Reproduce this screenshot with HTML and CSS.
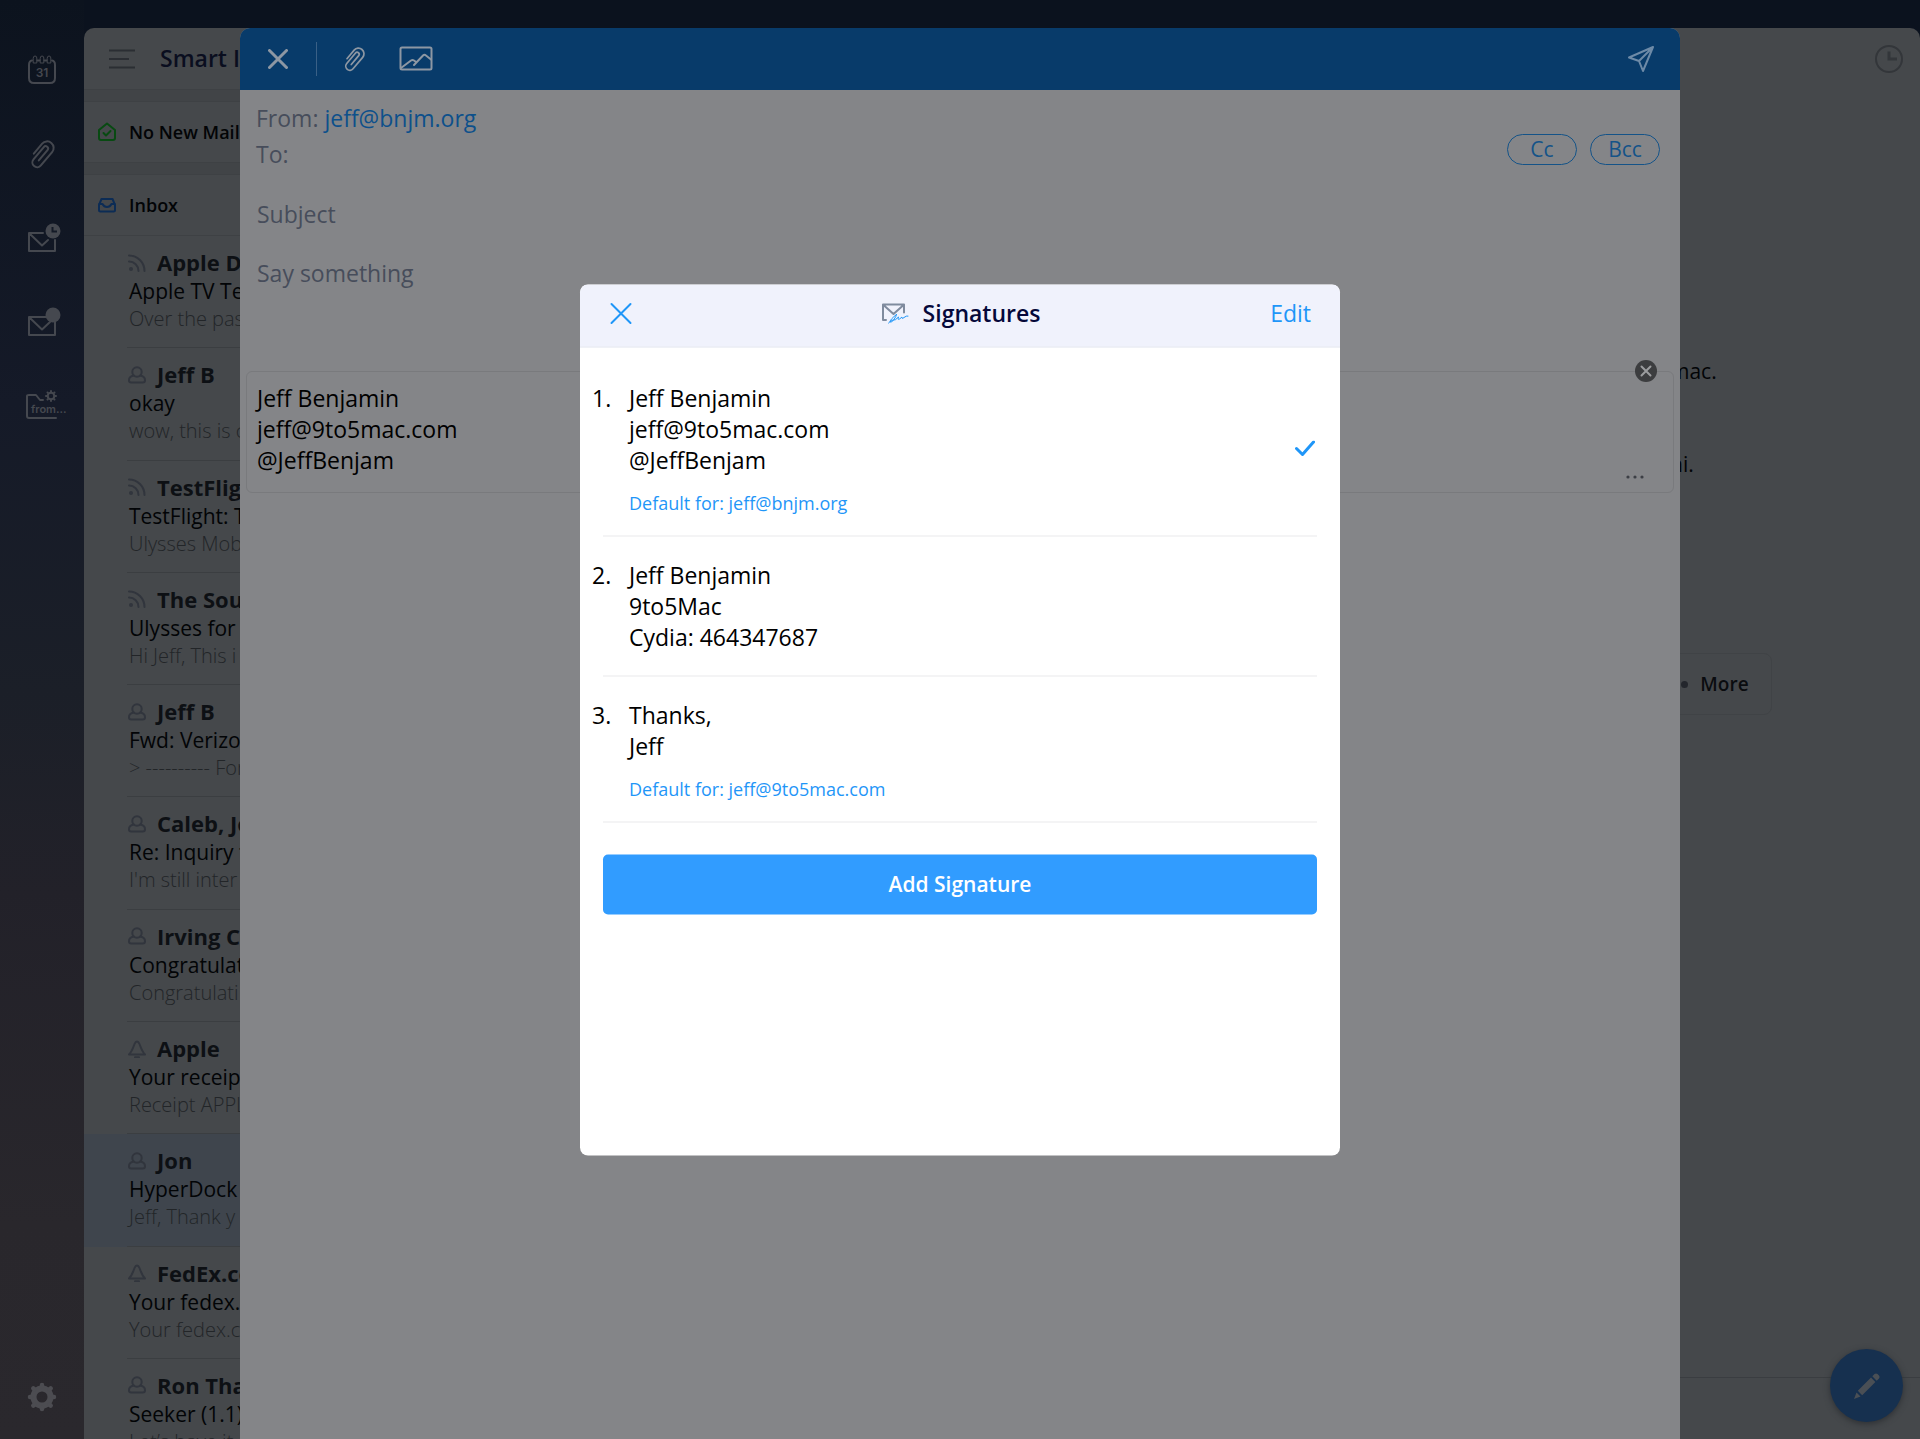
FILE: index.html
```html
<!DOCTYPE html>
<html lang="en">
<head>
<meta charset="utf-8">
<meta name="viewport" content="width=device-width, initial-scale=1">
<title>Signatures</title>
<link rel="stylesheet" href="styles.css">
</head>
<body>
<svg class="sprite" aria-hidden="true">
  <symbol id="feed" viewBox="0 0 18 18"><circle cx="3" cy="15" r="2" fill="currentColor" stroke="none"/><path d="M1 7.500a9.500 9.500 0 0 1 9.500 9.500M1 1.500a15.500 15.500 0 0 1 15.500 15.500"/></symbol>
  <symbol id="person" viewBox="0 0 18 18"><path d="M5.800 9.600C1.500 10.500 1 12.500 1 14.200C1 15.600 1.700 16.500 3.200 16.500H14.800C16.300 16.500 17 15.600 17 14.200C17 12.500 16.500 10.500 12.200 9.600"/><circle cx="9" cy="6" r="4.700"/></symbol>
  <symbol id="bell" viewBox="0 0 18 18"><path d="M1 14.500C4 11.500 5 8 6.500 4Q7.500 1.500 9 1.500T11.500 4C13 8 14 11.500 17 14.500Z"/><path d="M7 17.200H11"/></symbol>
  <symbol id="clip" viewBox="0 0 28 30"><path transform="translate(14 15) rotate(40)" d="M-6.500 5V-8A6.500 6.500 0 0 1 6.500 -8V9.500A4.800 4.800 0 0 1 -3.100 9.500V-6.500A2.300 2.300 0 0 1 1.700 -6.500V7"/></symbol>
</svg>
<div class="app">
  <nav class="rail" aria-label="Shortcuts">
    <button class="rail-btn" aria-label="Calendar"><svg width="30" height="30" viewBox="0 0 30 30"><path d="M5 5.500Q2 6 2 10V23Q2 28 7 28H23Q28 28 28 23V10Q28 6 25 5.500M10.500 5.500H12.500M17.500 5.500H19.500"/><path d="M6.200 5.500V8H9.800V3Q9.800 1 8 1T6.200 3ZM13.200 5.500V8H16.800V3Q16.800 1 15 1T13.200 3ZM20.200 5.500V8H23.800V3Q23.800 1 22 1T20.200 3Z" class="thin"/><text x="15" y="22" text-anchor="middle" class="cal-day">31</text></svg></button>
    <button class="rail-btn" aria-label="Attachments"><svg width="28" height="30"><use href="#clip"/></svg></button>
    <button class="rail-btn" aria-label="Snoozed"><svg width="34" height="30" viewBox="0 0 34 30"><path d="M18 10H4V28H30V17M5 11L17 22.500L23 17"/><circle cx="28" cy="8" r="7.500" class="solid"/><path d="M27.500 4V8.500H32" class="cut"/></svg></button>
    <button class="rail-btn" aria-label="Unread"><svg width="34" height="30" viewBox="0 0 34 30"><path d="M21 10H4V28H30V15M5 11L17 22.500L25 15"/><circle cx="28" cy="8" r="7.500" class="solid"/></svg></button>
    <button class="rail-btn folder" aria-label="Sender folder"><svg width="42" height="30" viewBox="0 0 42 30"><path d="M31 27H4Q2 27 2 25V5Q2 4 4 4H11L15 9H18"/><circle cx="26" cy="5" r="3.300"/><path d="M26 .5V0M26 10V9.500M21 5H21.500M30.500 5H31M22.800 1.800L22.500 1.500M29.200 1.800L29.500 1.500M22.800 8.200L22.500 8.500M29.200 8.200L29.500 8.500"/><text x="6" y="22" class="folder-name">from...</text></svg></button>
    <button class="rail-btn rail-settings" aria-label="Settings"><svg width="30" height="30" viewBox="0 0 30 30"><circle cx="15" cy="15" r="8.500" stroke-width="6"/><path stroke-width="4.500" d="M15 4V3M15 26V27M4 15H3M26 15H27M7.200 7.200L6.300 6.300M22.800 22.800L23.700 23.700M7.200 22.800L6.300 23.700M22.800 7.200L23.700 6.300"/></svg></button>
  </nav>
  <div class="panes">
    <section class="list-pane">
      <header class="list-head">
        <svg width="26" height="20" viewBox="0 0 26 20"><path d="M0 1.500H26M0 10H20M0 18.500H26"/></svg>
        <h2>Smart I</h2>
      </header>
      <div class="group green"><svg width="18" height="20" viewBox="0 0 18 20"><path d="M1 8L9 1.500L17 8V16Q17 18 15 18H3Q1 18 1 16ZM5.500 11L8 13.500L12.500 9"/></svg><span>No New Mail</span></div>
      <div class="group blue"><svg width="18" height="20" viewBox="0 0 18 20"><path d="M1 10L3.500 4H14.500L17 10V15Q17 16.500 15.500 16.500H2.500Q1 16.500 1 15ZM1 9H4.500Q6 12 9 12T13.500 9H17"/></svg><span>Inbox</span></div>
      <ul class="mails">
        <li><h3><svg><use href="#feed"/></svg>Apple D</h3><p>Apple TV Te</p><p class="preview">Over the pas</p></li>
        <li><h3><svg><use href="#person"/></svg>Jeff B</h3><p>okay</p><p class="preview">wow, this is c</p></li>
        <li><h3><svg><use href="#feed"/></svg>TestFlig</h3><p>TestFlight: T</p><p class="preview">Ulysses Mob</p></li>
        <li><h3><svg><use href="#feed"/></svg>The Sou</h3><p>Ulysses for</p><p class="preview">Hi Jeff, This i</p></li>
        <li><h3><svg><use href="#person"/></svg>Jeff B</h3><p>Fwd: Verizo</p><p class="preview">&gt; ---------- For</p></li>
        <li><h3><svg><use href="#person"/></svg>Caleb, Je</h3><p>Re: Inquiry f</p><p class="preview">I'm still inter</p></li>
        <li><h3><svg><use href="#person"/></svg>Irving C</h3><p>Congratulat</p><p class="preview">Congratulati</p></li>
        <li><h3><svg><use href="#bell"/></svg>Apple</h3><p>Your receip</p><p class="preview">Receipt APPL</p></li>
        <li class="selected"><h3><svg><use href="#person"/></svg>Jon</h3><p>HyperDock</p><p class="preview">Jeff, Thank y</p></li>
        <li><h3><svg><use href="#bell"/></svg>FedEx.co</h3><p>Your fedex.</p><p class="preview">Your fedex.c</p></li>
        <li><h3><svg><use href="#person"/></svg>Ron Tha</h3><p>Seeker (1.1)</p><p class="preview">Let’s have it</p></li>
      </ul>
    </section>
    <section class="reader">
      <header class="reader-head"><button aria-label="Snooze"><svg width="28" height="28" viewBox="0 0 28 28"><circle cx="14" cy="14" r="13"/><path d="M14 6.500V14H22" class="hand"/></svg></button></header>
      <div class="reader-body">
        <p>mac.</p>
        <p>ni.</p>
        <button class="more"><i></i>More</button>
      </div>
      <footer class="reader-foot"></footer>
    </section>
  </div>
</div>

<button class="fab" aria-label="Compose"><svg width="28" height="28" viewBox="0 0 28 28"><path d="M1 27L3.500 20.500L7.500 24.500ZM4.800 18.800L18 5.600L22.400 10L9.200 23.200ZM19.300 4.300L21.500 2.100Q23 .8 24.500 2.100L26 3.500Q27.300 5 26 6.500L23.700 8.700Z"/></svg></button>

<section class="compose">
  <header class="compose-bar">
    <button aria-label="Close message"><svg width="20" height="20" viewBox="0 0 20 20" class="bold"><path d="M1.500 1.500L18.500 18.500M18.500 1.500L1.500 18.500"/></svg></button>
    <i class="rule"></i>
    <button aria-label="Attach file"><svg width="24" height="26"><use href="#clip"/></svg></button>
    <button aria-label="Insert picture"><svg width="34" height="26" viewBox="0 0 34 26"><rect x="1.500" y="1.500" width="31" height="22" rx="1.500"/><path d="M2 22L12 14.500Q13.500 13.500 15 14.500L17 16M15 19L24 9.500Q25.500 8 27 9.500L32 13.500"/></svg></button>
    <button class="send" aria-label="Send"><svg width="28" height="28" viewBox="0 0 28 28"><path d="M26 2L2 12.500L12 16L16 26ZM26 2L12 16"/></svg></button>
  </header>
  <div class="address">
    <div class="address-lines">
      <p>From: <a href="#">jeff@bnjm.org</a></p>
      <label class="to">To: <input type="text"></label>
    </div>
    <div class="pills"><button>Cc</button><button>Bcc</button></div>
  </div>
  <input class="field subject" type="text" placeholder="Subject" aria-label="Subject">
  <textarea class="field message" placeholder="Say something" aria-label="Message"></textarea>
  <div class="signature">
    <p>Jeff Benjamin<br>jeff@9to5mac.com<br>@JeffBenjam</p>
    <button class="remove" aria-label="Remove signature"><svg width="22" height="22" viewBox="0 0 22 22"><circle cx="11" cy="11" r="11"/><path d="M6.500 6.500L15.500 15.500M15.500 6.500L6.500 15.500"/></svg></button>
    <button class="dots" aria-label="Choose signature"><svg width="18" height="4" viewBox="0 0 18 4"><circle cx="2" cy="2" r="1.600"/><circle cx="9" cy="2" r="1.600"/><circle cx="16" cy="2" r="1.600"/></svg></button>
  </div>
</section>

<section class="modal" role="dialog" aria-labelledby="modal-title">
  <header class="modal-head">
    <button class="modal-close" aria-label="Close"><svg width="22" height="22" viewBox="0 0 22 22"><path d="M1.500 1.500L20.500 20.500M20.500 1.500L1.500 20.500"/></svg></button>
    <h1 id="modal-title"><svg width="28" height="22" viewBox="0 0 28 22"><path d="M5 17.500H2V2H23V10M3 3L12.500 11.500L22 3"/><path class="ink" d="M15.500 12Q9 17 9 19.500Q10.500 20.500 13 17T15.500 12M7.500 20.500Q9 18.500 12 17.500Q14 18.500 17.500 14.500Q16.500 18 18.500 16.500T21 14.500Q20.500 17 23 15T27 13.500"/></svg>Signatures</h1>
    <button class="modal-edit">Edit</button>
  </header>
  <ol class="choices">
    <li class="is-default"><span class="num">1.</span><div><p>Jeff Benjamin<br>jeff@9to5mac.com<br>@JeffBenjam</p><p class="default">Default for: jeff@bnjm.org</p></div><svg class="tick" width="20" height="16" viewBox="0 0 20 16"><path d="M1.500 8L7.500 14L18.500 1.500"/></svg></li>
    <li><span class="num">2.</span><div><p>Jeff Benjamin<br>9to5Mac<br>Cydia: 464347687</p></div></li>
    <li class="is-default"><span class="num">3.</span><div><p>Thanks,<br>Jeff</p><p class="default">Default for: jeff@9to5mac.com</p></div></li>
  </ol>
  <button class="add">Add Signature</button>
</section>
</body>
</html>
```
FILE: styles.css
```css
* { box-sizing: border-box; margin: 0; padding: 0; }
html, body { height: 100%; }
body {
  position: relative;
  overflow: hidden;
  background: #0b121e;
  color: #000;
  font-family: "Open Sans", "Noto Sans", sans-serif;
  font-size: 23px;
  line-height: 31px;
}
button, input, textarea { border: 0; background: none; font: inherit; color: inherit; outline: none; }
button { display: flex; align-items: center; justify-content: center; }
svg { display: block; flex: none; fill: none; stroke: currentColor; stroke-width: 2; stroke-linecap: round; stroke-linejoin: round; }
ul, ol { list-style: none; }
a { text-decoration: none; }
.sprite { position: absolute; width: 0; height: 0; }

.app { display: flex; height: 100%; }
.rail {
  display: flex;
  flex-direction: column;
  align-items: center;
  gap: 54px;
  width: 84px;
  padding: 55px 0 27px;
  background: linear-gradient(#0c131e, #151a28 28%, #1b1f28 48%, #222129 62%, #29272c 85%, #2a282d);
  color: #45484f;
}
.rail-btn { height: 30px; overflow: visible; }
.rail-btn svg { overflow: visible; }
.rail-settings { margin-top: auto; color: #4c4c51; }
.folder { padding-left: 8px; }
.thin { stroke-width: 1; }
.solid { fill: currentColor; stroke: none; }
.cut { stroke: #141a27; stroke-linecap: butt; stroke-linejoin: miter; }
.cal-day, .folder-name { fill: currentColor; stroke: none; font-family: Inter, sans-serif; font-weight: 600; font-size: 12px; }
.folder-name { font-size: 11px; }

.panes {
  display: flex;
  flex: 1;
  min-width: 0;
  margin-top: 28px;
  overflow: hidden;
  background: #45484b;
  border-radius: 10px 10px 0 0;
}
.list-pane { display: flex; flex-direction: column; width: 400px; }
.list-head { display: flex; align-items: center; gap: 25px; height: 62px; padding-left: 25px; border-bottom: 1px solid #3e4144; color: #2b2e33; }
.list-head svg { stroke-linecap: butt; }
.list-head h2 { font-size: 23px; font-weight: 600; color: #0a0e1f; }
.group { display: flex; align-items: center; gap: 13px; height: 62px; margin-top: 11px; padding-left: 14px; border: solid #3e4144; border-width: 1px 0; box-shadow: 0 -11px #414447; font-size: 18px; font-weight: 600; }
.group span { color: #020406; }
.green { color: #084a12; }
.blue { color: #0c2c55; }
.mails { display: flex; flex: 1; flex-direction: column; min-height: 0; color: #0d1014; }
.mails li { position: relative; flex: 1; min-height: 0; padding: 12px 0 0 45px; }
.mails li:last-child { flex: 0 0 80px; overflow: hidden; }
.mails li:not(:last-child)::after { content: ""; position: absolute; inset: auto 0 0 43px; border-bottom: 1px solid #3b3e41; }
.mails h3 { display: flex; align-items: center; gap: 11px; font-size: 22px; line-height: 29px; font-weight: 700; }
.mails h3 svg { width: 18px; height: 18px; margin-left: -1px; color: #31353d; }
.mails p { font-size: 21px; line-height: 28px; color: #020406; }
.mails .preview { font-size: 20px; font-weight: 300; line-height: 27px; color: #222528; }
.mails .selected { background: #3f454d; }

.reader { display: flex; flex: 1; flex-direction: column; min-width: 0; }
.reader-head { display: flex; justify-content: flex-end; padding: 17px 17px 0; color: #33363a; }
.hand { stroke-width: 3; stroke-linecap: butt; stroke-linejoin: miter; }
.reader-body { flex: 1; padding: 283px 0 0 calc(87.5vw - 494px); font-size: 21px; }
.reader-body p { margin-bottom: 62px; color: #020406; }
.more { gap: 12px; width: 132px; height: 62px; margin: 173px 0 0 -30px; padding-left: 18px; border: 1px solid #404346; border-radius: 8px; color: #0a0c0f; font-size: 19px; font-weight: 600; }
.more i { width: 7px; height: 7px; border-radius: 50%; background: #23262c; }
.reader-foot { height: 62px; border-top: 1px solid #3a3d41; }

.fab { position: absolute; right: 17px; bottom: 17px; width: 73px; height: 73px; border-radius: 50%; background: #16304f; box-shadow: 0 2px 6px #2d3034; color: #4a4f55; }
.fab svg { fill: currentColor; stroke: none; }

.compose {
  position: absolute;
  inset: 28px 12.5% 0;
  display: flex;
  flex-direction: column;
  overflow: hidden;
  border-radius: 10px 10px 0 0;
  background: #848588;
  color: #474d5b;
}
.compose-bar { display: flex; align-items: center; height: 62px; padding: 0 25px 0 28px; background: #083b6a; color: #8d97a3; }
.bold { stroke-width: 3; }
.rule { width: 1px; height: 34px; margin: 0 25px 0 28px; background: #3a6086; }
.compose-bar button + button { margin-left: 33px; }
.compose-bar .send { margin-left: auto; color: #6d8aa7; }
.address { display: flex; justify-content: space-between; padding: 13px 20px 0 16px; }
.address-lines { display: flex; flex-direction: column; gap: 5px; }
.address a { color: #0d508b; }
.to input { width: 600px; }
.pills { display: flex; gap: 13px; margin-top: 31px; }
.pills button { width: 70px; height: 31px; border: 1px solid #145388; border-radius: 16px; color: #145388; font-size: 21px; }
.field { display: block; padding: 0 17px; }
.field::placeholder { color: #474d5b; opacity: 1; }
.subject { height: 31px; margin-top: 29px; }
.message { height: 113px; margin-top: 28px; resize: none; }
.signature { position: relative; margin: 0 6px; padding: 11px 10px 16px; border: 1px solid #797a7d; border-radius: 6px; color: #000; }
.remove { position: absolute; top: -12px; right: 16px; }
.remove svg { stroke: #9b9c9e; }
.remove circle { fill: #3c3d3f; stroke: none; }
.dots { position: absolute; right: 29px; bottom: 13px; }
.dots svg { fill: #3c3f45; stroke: none; }

.modal {
  position: absolute;
  top: 50%;
  left: 50%;
  width: 760px;
  height: 871px;
  transform: translate(-50%, -50%);
  overflow: hidden;
  border-radius: 8px;
  background: #fff;
}
.modal-head { display: grid; grid-template-columns: 1fr auto 1fr; align-items: center; height: 63px; padding: 0 29px 4px 30px; border-bottom: 1px solid #e8eaf0; background: #f0f2fc; }
.modal-head button { color: #1f96f8; }
.modal-close { justify-self: start; }
.modal-edit { justify-self: end; }
.modal h1 { display: flex; align-items: center; gap: 14px; color: #05083a; font-size: 23px; font-weight: 600; }
.modal h1 svg { color: #7f8b9e; }
.ink { stroke: #1f96f8; stroke-width: 1; }
.choices { padding: 12px 23px 0; }
.choices li { display: flex; align-items: center; padding: 23px 0; border-bottom: 1px solid #e9eaeb; }
.choices .is-default { padding-bottom: 21px; }
.num { align-self: flex-start; width: 37px; margin-left: -11px; }
.choices .default { margin-top: 15px; color: #1f96f8; font-size: 18px; line-height: 24px; }
.tick { margin: 0 2px 0 auto; color: #1f96f8; stroke-width: 3; }
.add { width: 714px; height: 60px; margin: 32px 23px 0; border-radius: 5px; background: #319cff; color: #fff; font-size: 21px; font-weight: 600; }
```
